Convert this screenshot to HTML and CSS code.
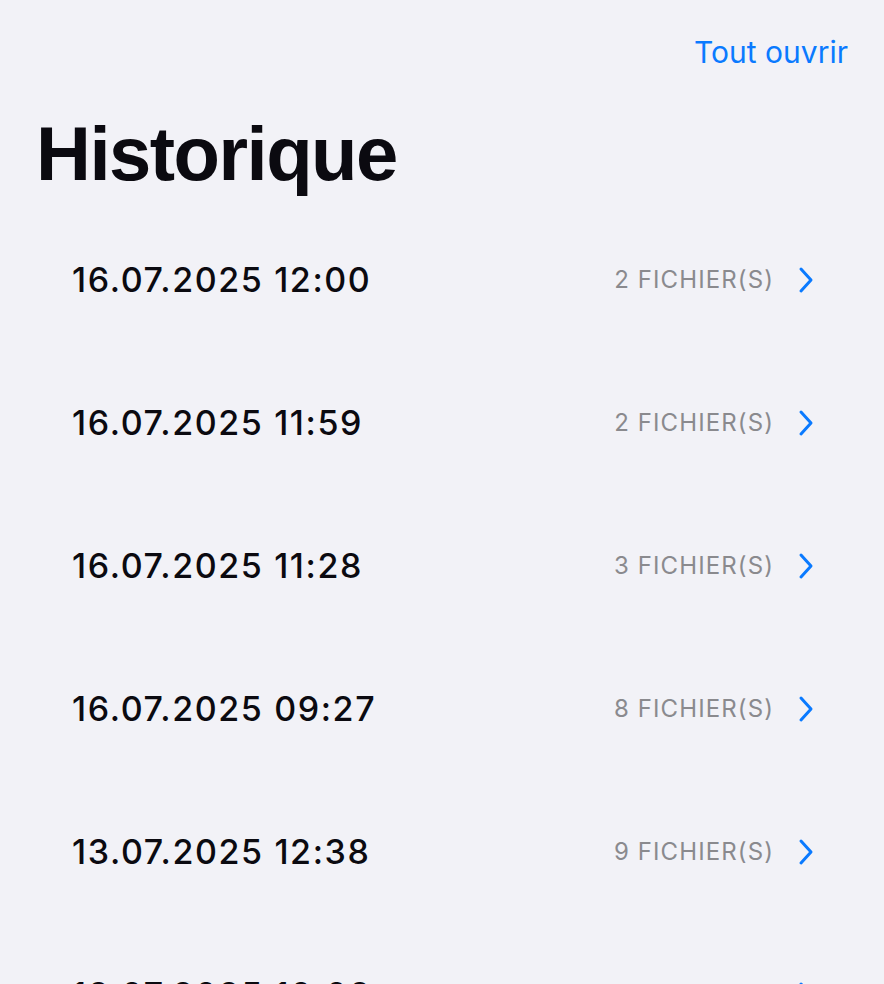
FILE: index.html
```html
<!DOCTYPE html>
<html lang="fr">
<head>
    <meta charset="UTF-8">
    <meta name="viewport" content="width=device-width, initial-scale=1.0">
    <title>Historique</title>
    <link rel="stylesheet" href="styles.css">
</head>
<body>

<!-- Barre du haut -->
<div class="topbar">
    <a class="open-all" href="#">Tout ouvrir</a>
</div>

<h1 class="title">Historique</h1>

<!-- Liste de l'historique -->
<ul class="history">
    <li class="row">
        <span class="date">16.07.2025 12:00</span>
        <span class="count">2 FICHIER(S)</span>
        <svg class="chevron" viewBox="0 0 16 28"><path d="M3 3 L13 14 L3 25"/></svg>
    </li>
    <li class="row">
        <span class="date">16.07.2025 11:59</span>
        <span class="count">2 FICHIER(S)</span>
        <svg class="chevron" viewBox="0 0 16 28"><path d="M3 3 L13 14 L3 25"/></svg>
    </li>
    <li class="row">
        <span class="date">16.07.2025 11:28</span>
        <span class="count">3 FICHIER(S)</span>
        <svg class="chevron" viewBox="0 0 16 28"><path d="M3 3 L13 14 L3 25"/></svg>
    </li>
    <li class="row">
        <span class="date">16.07.2025 09:27</span>
        <span class="count">8 FICHIER(S)</span>
        <svg class="chevron" viewBox="0 0 16 28"><path d="M3 3 L13 14 L3 25"/></svg>
    </li>
    <li class="row">
        <span class="date">13.07.2025 12:38</span>
        <span class="count">9 FICHIER(S)</span>
        <svg class="chevron" viewBox="0 0 16 28"><path d="M3 3 L13 14 L3 25"/></svg>
    </li>
    <li class="row">
        <span class="date">13.07.2025 10:08</span>
        <span class="count">4 FICHIER(S)</span>
        <svg class="chevron" viewBox="0 0 16 28"><path d="M3 3 L13 14 L3 25"/></svg>
    </li>
</ul>

</body>
</html>
```

FILE: styles.css
```css
body {
    font-family: Inter, "Liberation Sans", sans-serif;
    margin: 0;
    padding: 0;
    background-color: #f2f2f7;
    color: #0b0a10;
    overflow: hidden;
    height: 984px;
}
.topbar {
    display: flex;
    justify-content: flex-end;
    padding: 32px 36px 0 0;
    height: 40px;
}
.open-all {
    color: #0a7aff;
    font-size: 30px;
    text-decoration: none;
    line-height: 40px;
}
.title {
    font-family: "Liberation Sans", Arial, sans-serif;
    font-weight: bold;
    font-size: 76px;
    margin: 42px 0 0 36px;
    line-height: 80px;
    letter-spacing: -1.5px;
}
.history {
    list-style: none;
    margin: 0;
    padding: 0 0 0 72px;
}
.row {
    display: flex;
    align-items: center;
    height: 143px;
    padding-right: 70px;
}
.row:first-child {
    margin-top: 14px;
}
.date {
    flex: 1;
    font-size: 34px;
    font-weight: 500;
    letter-spacing: 1.6px;
}
.count {
    color: #8a8a8e;
    font-size: 24px;
    letter-spacing: 1.1px;
}
.chevron {
    width: 16px;
    height: 28px;
    margin-left: 24px;
    fill: none;
    stroke: #0a7aff;
    stroke-width: 3;
    stroke-linecap: round;
    stroke-linejoin: round;
}
```
